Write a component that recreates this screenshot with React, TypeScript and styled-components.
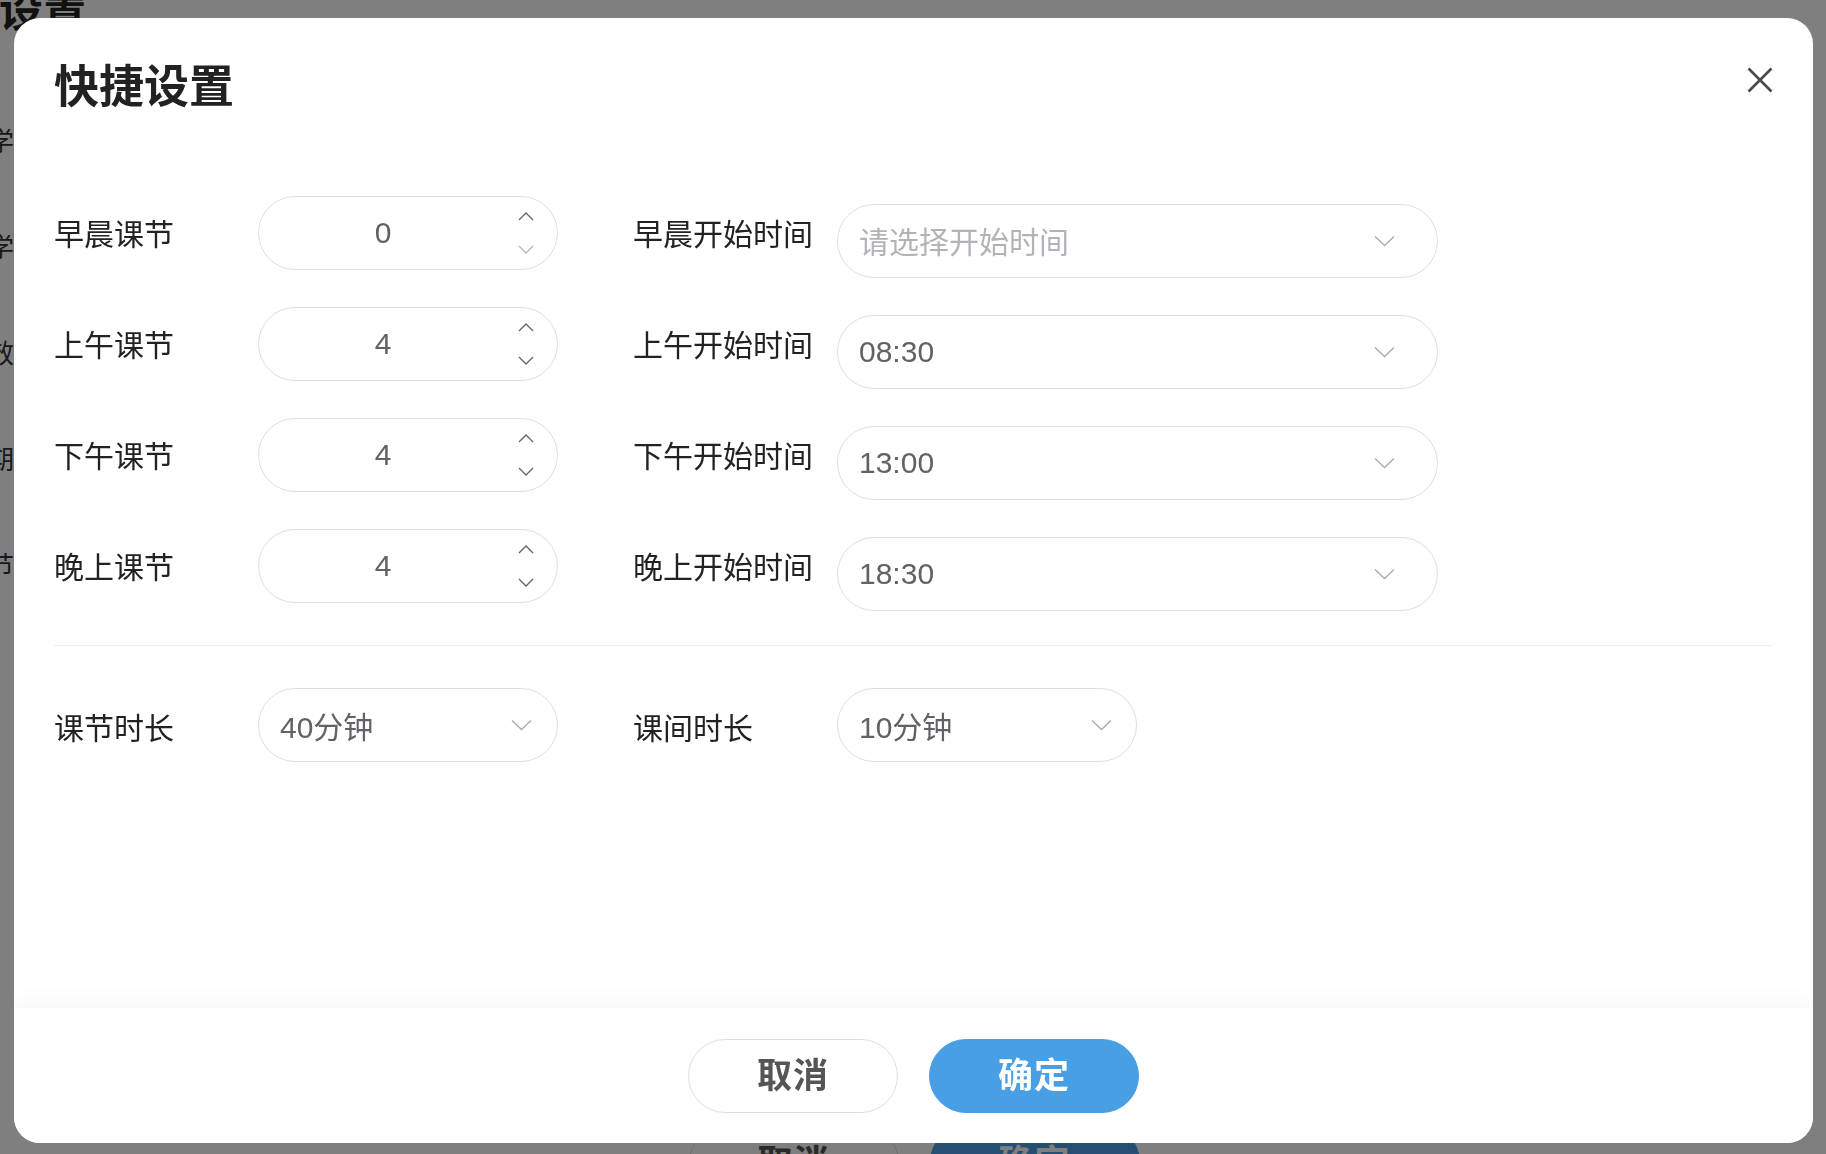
import React, { useState } from "react";
import styled, { createGlobalStyle } from "styled-components";

const GlobalStyle = createGlobalStyle`
  html, body {
    margin: 0;
    padding: 0;
    height: 100%;
    overflow: hidden;
    font-family: "Liberation Sans", "Noto Sans CJK SC", sans-serif;
    background: #fff;
  }
  * {
    box-sizing: border-box;
  }
`;

/* page behind the dialog */

const Page = styled.div`
  display: flex;
  flex-direction: column;
  height: 100vh;
  overflow: hidden;
  background: #fff;
`;

const PageTitle = styled.h1`
  margin: -10px 0 0 -1px;
  color: #222;
  font-size: 44px;
  line-height: 44px;
  font-weight: 700;
`;

const PageLabels = styled.div`
  display: flex;
  flex-direction: column;
  gap: 80px;
  margin: 95px 0 0 -12px;
`;

const PageLabel = styled.span`
  color: #333;
  font-size: 26px;
  line-height: 26px;
`;

const PageBody = styled.div`
  flex: 1;
`;

const PageFooter = styled.div`
  display: flex;
  justify-content: center;
  align-items: flex-start;
  gap: 31px;
  height: 29px;
  padding-left: 2px;
`;

/* dialog */

const Overlay = styled.div`
  position: fixed;
  inset: 0;
  display: flex;
  padding: 18px 13px 11px 14px;
  background: rgba(0, 0, 0, 0.5);
`;

const Modal = styled.div`
  flex: 1;
  display: flex;
  flex-direction: column;
  overflow: hidden;
  background: #fff;
  border-radius: 26px;
`;

const Header = styled.div`
  display: flex;
  justify-content: space-between;
  align-items: flex-start;
  padding: 48px 40px 0;
`;

const Title = styled.h2`
  margin: 0;
  color: #222;
  font-size: 45px;
  line-height: 44px;
  font-weight: 700;
`;

const CloseButton = styled.button`
  display: flex;
  align-items: center;
  justify-content: center;
  width: 40px;
  height: 40px;
  margin: -6px -7px 0 0;
  padding: 0;
  border: 0;
  background: none;
  cursor: pointer;
`;

const Body = styled.div`
  flex: 1;
  padding: 86px 40px 0;
`;

const Rows = styled.div`
  display: flex;
  flex-direction: column;
  gap: 29px;
`;

const Row = styled.div`
  display: flex;
  align-items: flex-start;
`;

const Label = styled.label<{ $gap?: number; $shift?: number }>`
  flex: none;
  width: 204px;
  margin-left: ${(p) => p.$gap ?? 0}px;
  padding-top: ${(p) => p.$shift ?? 2}px;
  color: #222;
  font-size: 30px;
  line-height: 74px;
  white-space: nowrap;
`;

const NumberBox = styled.div`
  display: flex;
  flex: none;
  width: 300px;
  height: 74px;
  border: 1px solid #dcdfe6;
  border-radius: 37px;
  background: #fff;
`;

const NumberValue = styled.div`
  flex: 1;
  color: #606266;
  font-size: 30px;
  line-height: 72px;
  text-align: center;
`;

const Spinner = styled.div`
  display: flex;
  flex-direction: column;
  justify-content: center;
  gap: 17px;
  width: 50px;
  padding-right: 12px;
`;

const SpinButton = styled.button<{ $disabled?: boolean }>`
  display: flex;
  align-items: center;
  justify-content: center;
  height: 16px;
  padding: 0;
  border: 0;
  background: none;
  color: ${(p) => (p.$disabled ? "#b4b6bb" : "#606266")};
  cursor: pointer;
`;

const SelectBox = styled.div<{ $width: number; $offset?: number; $arrowGap: number }>`
  display: flex;
  align-items: center;
  flex: none;
  width: ${(p) => p.$width}px;
  height: 74px;
  margin-top: ${(p) => p.$offset ?? 0}px;
  padding: 0 ${(p) => p.$arrowGap}px 0 21px;
  border: 1px solid #dcdfe6;
  border-radius: 37px;
  background: #fff;
  cursor: pointer;
`;

const SelectText = styled.span<{ $placeholder?: boolean }>`
  flex: 1;
  margin-top: ${(p) => (p.$placeholder ? -3 : 0)}px;
  color: ${(p) => (p.$placeholder ? "#b1b3b8" : "#606266")};
  font-size: 30px;
  white-space: nowrap;
`;

const Divider = styled.div`
  height: 1px;
  margin: 34px 0 42px;
  background: #ebeef5;
`;

const Footer = styled.div`
  display: flex;
  justify-content: center;
  align-items: center;
  gap: 31px;
  height: 135px;
  background: #fff;
  box-shadow: 0 -6px 22px rgba(0, 0, 0, 0.035);
`;

const Button = styled.button<{ $primary?: boolean }>`
  width: 210px;
  height: 74px;
  padding: 0 0 6px;
  border: 1px solid ${(p) => (p.$primary ? "#489fe4" : "#dcdfe6")};
  border-radius: 37px;
  background: ${(p) => (p.$primary ? "#489fe4" : "#fff")};
  color: ${(p) => (p.$primary ? "#fff" : "#555")};
  font-family: "Liberation Sans", "Noto Sans CJK SC", sans-serif;
  font-size: 35px;
  font-weight: 700;
  letter-spacing: 1px;
  cursor: pointer;
`;

const Chevron: React.FC = () => (
  <svg width="21" height="12" viewBox="0 0 21 12" fill="none">
    <path d="M1 1.5 L10.5 10.5 L20 1.5" stroke="#a8abb2" strokeWidth="1.4" />
  </svg>
);

const ArrowUp: React.FC = () => (
  <svg width="16" height="9" viewBox="0 0 16 9" fill="none">
    <path d="M1 8 L8 1 L15 8" stroke="currentColor" strokeWidth="1.3" />
  </svg>
);

const ArrowDown: React.FC = () => (
  <svg width="16" height="9" viewBox="0 0 16 9" fill="none">
    <path d="M1 1 L8 8 L15 1" stroke="currentColor" strokeWidth="1.3" />
  </svg>
);

const CloseIcon: React.FC = () => (
  <svg width="26" height="26" viewBox="0 0 26 26" fill="none">
    <path d="M1.5 1.5 L24.5 24.5 M24.5 1.5 L1.5 24.5" stroke="#4a4a4a" strokeWidth="2.6" />
  </svg>
);

interface StepperProps {
  value: number;
  onChange: (v: number) => void;
}

const Stepper: React.FC<StepperProps> = ({ value, onChange }) => (
  <NumberBox>
    <NumberValue>{value}</NumberValue>
    <Spinner>
      <SpinButton onClick={() => onChange(value + 1)}>
        <ArrowUp />
      </SpinButton>
      <SpinButton $disabled={value <= 0} onClick={() => onChange(Math.max(0, value - 1))}>
        <ArrowDown />
      </SpinButton>
    </Spinner>
  </NumberBox>
);

const periods = [
  { key: "morning", label: "早晨课节", timeLabel: "早晨开始时间", count: 0, time: "" },
  { key: "am", label: "上午课节", timeLabel: "上午开始时间", count: 4, time: "08:30" },
  { key: "pm", label: "下午课节", timeLabel: "下午开始时间", count: 4, time: "13:00" },
  { key: "night", label: "晚上课节", timeLabel: "晚上开始时间", count: 4, time: "18:30" },
];

const App: React.FC = function () {
  const [counts, setCounts] = useState<number[]>(periods.map((p) => p.count));

  const setCount = (i: number, v: number) => {
    setCounts((prev) => prev.map((c, idx) => (idx === i ? v : c)));
  };

  return (
    <>
      <GlobalStyle />
      <Page>
        <PageTitle>设置</PageTitle>
        <PageLabels>
          <PageLabel>学年</PageLabel>
          <PageLabel>学期</PageLabel>
          <PageLabel>效周</PageLabel>
          <PageLabel>期数</PageLabel>
          <PageLabel>节次</PageLabel>
        </PageLabels>
        <PageBody />
        <PageFooter>
          <Button>取消</Button>
          <Button $primary>确定</Button>
        </PageFooter>
      </Page>

      <Overlay>
        <Modal>
          <Header>
            <Title>快捷设置</Title>
            <CloseButton aria-label="关闭">
              <CloseIcon />
            </CloseButton>
          </Header>

          <Body>
            <Rows>
              {periods.map((p, i) => (
                <Row key={p.key}>
                  <Label>{p.label}</Label>
                  <Stepper value={counts[i]} onChange={(v) => setCount(i, v)} />
                  <Label $gap={75}>{p.timeLabel}</Label>
                  <SelectBox $width={601} $offset={8} $arrowGap={42}>
                    <SelectText $placeholder={!p.time}>{p.time || "请选择开始时间"}</SelectText>
                    <Chevron />
                  </SelectBox>
                </Row>
              ))}
            </Rows>

            <Divider />

            <Row>
              <Label $shift={4}>课节时长</Label>
              <SelectBox $width={300} $arrowGap={25}>
                <SelectText>40分钟</SelectText>
                <Chevron />
              </SelectBox>
              <Label $gap={75} $shift={4}>课间时长</Label>
              <SelectBox $width={300} $arrowGap={24}>
                <SelectText>10分钟</SelectText>
                <Chevron />
              </SelectBox>
            </Row>
          </Body>

          <Footer>
            <Button>取消</Button>
            <Button $primary>确定</Button>
          </Footer>
        </Modal>
      </Overlay>
    </>
  );
};

export default App;
